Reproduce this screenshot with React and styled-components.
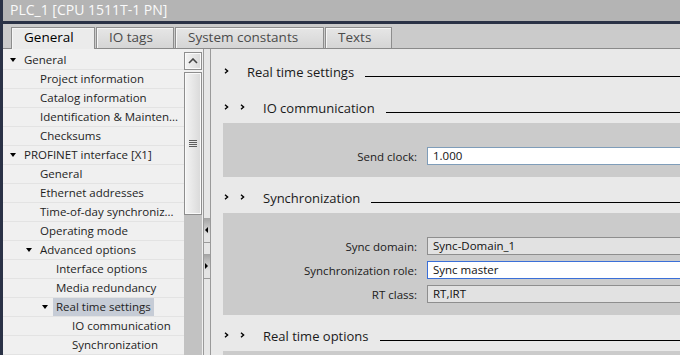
import React from "react";
import styled, { createGlobalStyle } from "styled-components";

const GlobalStyle = createGlobalStyle`
  html, body {
    margin: 0;
    padding: 0;
    background: #e9e9e9;
  }
  body {
    font-family: "Open Sans", "Segoe UI", sans-serif;
  }
`;

const Window = styled.div`
  width: 680px;
  height: 355px;
  overflow: hidden;
  display: flex;
  flex-direction: column;
  box-sizing: border-box;
  border-left: 3px solid #2a3246;
  background: #e9e9e9;
`;

const TitleBar = styled.div`
  flex: none;
  height: 21px;
  line-height: 20px;
  padding-left: 7px;
  font-size: 14px;
  color: #fafafa;
  background: #b4b4b4;
  border-bottom: 3px solid #2a3246;
  white-space: nowrap;
`;

const TabBar = styled.div`
  flex: none;
  height: 25px;
  box-sizing: border-box;
  display: flex;
  align-items: flex-end;
  gap: 1px;
  padding-left: 8px;
  background: #cbcbcb;
  border-bottom: 1px solid #8a8a8a;
`;

const Tab = styled.div`
  width: ${({ $width }) => $width}px;
  height: 21px;
  box-sizing: border-box;
  padding-left: 12px;
  font-size: 13.5px;
  line-height: 18px;
  white-space: nowrap;
  border: 1px solid #8d8d8d;
  border-bottom: none;
  box-shadow: inset 1px 1px 0 #f6f6f6;
  color: ${({ $active }) => ($active ? "#000" : "#4b4b4b")};
  background: ${({ $active }) =>
    $active ? "#ebebeb" : "linear-gradient(#e6e6e6, #d5d5d5)"};
  ${({ $active }) => $active && `margin-bottom: -1px; height: 22px;`}
`;

const Body = styled.div`
  flex: 1;
  min-height: 0;
  display: flex;
`;

const Tree = styled.div`
  flex: none;
  width: 181px;
  padding-top: 2px;
  background: #f0f0f0;
`;

const TreeRow = styled.div`
  height: 19px;
  box-sizing: border-box;
  display: flex;
  align-items: center;
  padding-left: ${({ $level }) => 7 + $level * 16}px;
  border-bottom: 1px solid #e3e3e3;
  font-size: 11.5px;
  color: #1e1e1e;
  white-space: nowrap;
`;

const Twisty = styled.span`
  flex: none;
  width: 14px;
  display: flex;
  align-items: center;
  &::before {
    content: "";
    display: ${({ $open }) => ($open ? "block" : "none")};
    border-left: 3.5px solid transparent;
    border-right: 3.5px solid transparent;
    border-top: 4px solid #000;
  }
`;

const TreeLabel = styled.span`
  height: 18px;
  line-height: 18px;
  padding: 0 3px;
  margin-left: -3px;
  background: ${({ $selected }) => ($selected ? "#c6ccd6" : "transparent")};
`;

const ScrollColumn = styled.div`
  flex: none;
  width: 19px;
  padding-top: 3px;
  display: flex;
  flex-direction: column;
  gap: 2px;
  background: #f0f0f0;
`;

const ScrollPiece = styled.div`
  width: 18px;
  box-sizing: border-box;
  border: 1px solid #8e8e8e;
  box-shadow: inset 0 0 0 1px #fafafa;
  background: linear-gradient(to right, #f4f4f4, #d9d9d9);
  display: flex;
  align-items: center;
  justify-content: center;
`;

const UpButton = styled(ScrollPiece)`
  height: 18px;
  flex: none;
`;

const Track = styled.div`
  flex: 1;
  width: 18px;
  background: #c2c2c2;
`;

const Thumb = styled(ScrollPiece)`
  height: 143px;
`;

const Grip = styled.div`
  width: 8px;
  height: 7px;
  background: repeating-linear-gradient(#5c5c5c 0 1px, transparent 1px 2px);
`;

const Splitter = styled.div`
  flex: none;
  width: 8px;
  box-sizing: border-box;
  padding-top: 169px;
  display: flex;
  flex-direction: column;
  gap: 11px;
  background: #e6e6e6;
  border-left: 1px solid #9a9a9a;
  border-right: 1px solid #9a9a9a;
`;

const SplitButton = styled.div`
  height: 24px;
  display: flex;
  align-items: center;
  padding-left: 1px;
  background: linear-gradient(#a2a2a2, #e4e4e4 70%);
  border-bottom: 1px solid #9a9a9a;
  &::before {
    content: "";
    border-top: 3px solid transparent;
    border-bottom: 3px solid transparent;
    ${({ $dir }) =>
      $dir === "left"
        ? "border-right: 3px solid #000;"
        : "border-left: 3px solid #000;"}
  }
`;

const Content = styled.div`
  flex: 1;
  min-width: 0;
  overflow: hidden;
  padding-top: 2px;
  background: #e9e9e9;
`;

const Header = styled.div`
  height: 36px;
  box-sizing: border-box;
  display: flex;
  align-items: baseline;
  padding: 13px 0 0 13px;
`;

const Chevron = styled.svg`
  flex: none;
  width: 16px;
  height: 10px;
`;

const HeaderTitle = styled.span`
  margin-left: 7px;
  font-size: 13px;
  line-height: 16px;
  color: #1a1a1a;
  white-space: nowrap;
`;

const HeaderLine = styled.div`
  flex: 1;
  height: 1px;
  margin-left: 11px;
  background: #000;
`;

const Panel = styled.div`
  margin: 0 -40px 0 12px;
  padding: 24px 0 12px;
  min-height: ${({ $minHeight }) => $minHeight || 0}px;
  display: grid;
  grid-template-columns: 194px 1fr;
  column-gap: 10px;
  row-gap: 6px;
  align-items: center;
  background: #cbcbcb;
`;

const FieldLabel = styled.div`
  text-align: right;
  font-size: 11.5px;
  color: #202020;
  white-space: nowrap;
`;

const fieldTones = {
  edit: { border: "#7f9db9", bg: "#fff" },
  focus: { border: "#3a6fd8", bg: "#fff" },
  readonly: { border: "#8e8e8e", bg: "#e2e2e2" },
};

const Field = styled.div`
  height: 18px;
  box-sizing: border-box;
  padding-left: 5px;
  font-size: 11.5px;
  line-height: 16px;
  color: #111;
  border: 1px solid ${({ $tone }) => fieldTones[$tone].border};
  background: ${({ $tone }) => fieldTones[$tone].bg};
`;

const treeItems = [
  { level: 0, label: "General", open: true },
  { level: 1, label: "Project information" },
  { level: 1, label: "Catalog information" },
  { level: 1, label: "Identification & Mainten..." },
  { level: 1, label: "Checksums" },
  { level: 0, label: "PROFINET interface [X1]", open: true },
  { level: 1, label: "General" },
  { level: 1, label: "Ethernet addresses" },
  { level: 1, label: "Time-of-day synchroniz..." },
  { level: 1, label: "Operating mode" },
  { level: 1, label: "Advanced options", open: true },
  { level: 2, label: "Interface options" },
  { level: 2, label: "Media redundancy" },
  { level: 2, label: "Real time settings", open: true, selected: true },
  { level: 3, label: "IO communication" },
  { level: 3, label: "Synchronization" },
];

const tabs = [
  { label: "General", width: 84, active: true },
  { label: "IO tags", width: 78 },
  { label: "System constants", width: 149 },
  { label: "Texts", width: 67 },
];

const SectionHeader = ({ level, title }) => (
  <Header>
    {Array.from({ length: level }).map((_, i) => (
      <Chevron key={i} viewBox="0 0 16 10">
        <path d="M1 1.8 L3.6 4 L1 6.2" fill="none" stroke="#000" strokeWidth="1.4" />
      </Chevron>
    ))}
    <HeaderTitle>{title}</HeaderTitle>
    <HeaderLine />
  </Header>
);

const FieldRow = ({ label, value, tone }) => (
  <>
    <FieldLabel>{label}</FieldLabel>
    <Field $tone={tone}>{value}</Field>
  </>
);

export default function App() {
  return (
    <>
      <GlobalStyle />
      <Window>
        <TitleBar>PLC_1 [CPU 1511T-1 PN]</TitleBar>
        <TabBar>
          {tabs.map((t) => (
            <Tab key={t.label} $width={t.width} $active={t.active}>
              {t.label}
            </Tab>
          ))}
        </TabBar>
        <Body>
          <Tree>
            {treeItems.map((item, i) => (
              <TreeRow key={i} $level={item.level}>
                <Twisty $open={item.open} />
                <TreeLabel $selected={item.selected}>{item.label}</TreeLabel>
              </TreeRow>
            ))}
          </Tree>
          <ScrollColumn>
            <UpButton>
              <svg width="10" height="6" viewBox="0 0 10 6">
                <path d="M1 5 L5 1 L9 5" fill="none" stroke="#444" strokeWidth="1.6" />
              </svg>
            </UpButton>
            <Track>
              <Thumb>
                <Grip />
              </Thumb>
            </Track>
          </ScrollColumn>
          <Splitter>
            <SplitButton $dir="left" />
            <SplitButton $dir="right" />
          </Splitter>
          <Content>
            <SectionHeader level={1} title="Real time settings" />
            <SectionHeader level={2} title="IO communication" />
            <Panel>
              <FieldRow label="Send clock:" value="1.000" tone="edit" />
            </Panel>
            <SectionHeader level={2} title="Synchronization" />
            <Panel>
              <FieldRow label="Sync domain:" value="Sync-Domain_1" tone="readonly" />
              <FieldRow label="Synchronization role:" value="Sync master" tone="focus" />
              <FieldRow label="RT class:" value="RT,IRT" tone="readonly" />
            </Panel>
            <SectionHeader level={2} title="Real time options" />
            <Panel $minHeight={40} />
          </Content>
        </Body>
      </Window>
    </>
  );
}
